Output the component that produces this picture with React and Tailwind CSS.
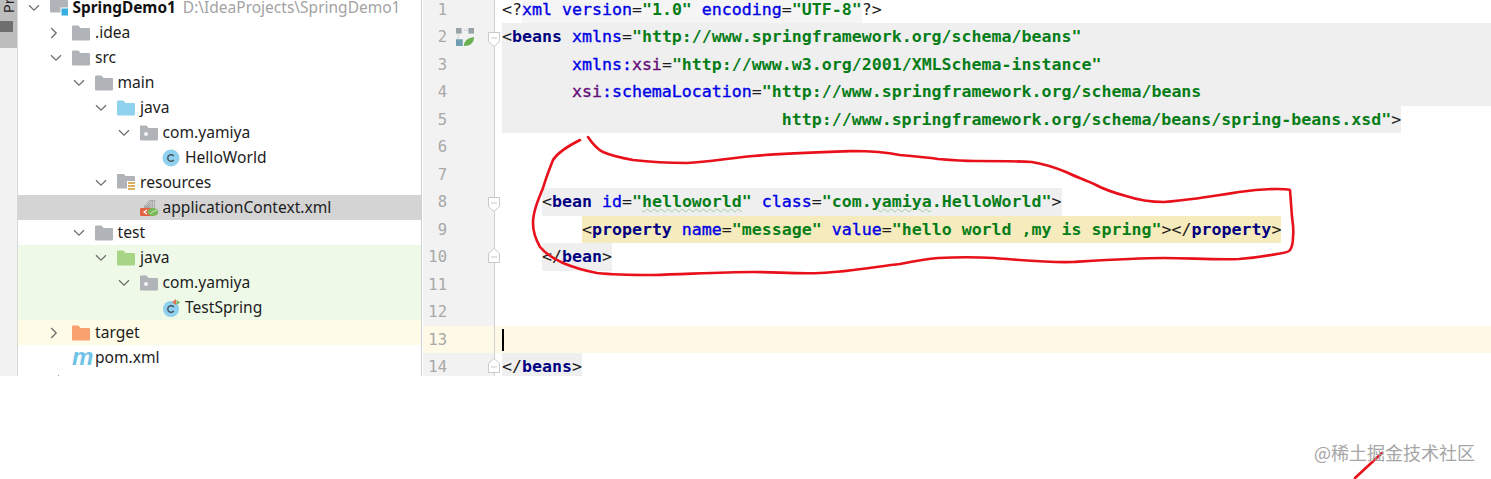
import React from 'react';

const TREE_ROWS = [
  { level: 0, open: true, icon: 'module', label: 'SpringDemo1', bold: true, hint: 'D:\\IdeaProjects\\SpringDemo1' },
  { level: 1, open: false, icon: 'folder', label: '.idea' },
  { level: 1, open: true, icon: 'folder', label: 'src' },
  { level: 2, open: true, icon: 'folder', label: 'main' },
  { level: 3, open: true, icon: 'java', label: 'java' },
  { level: 4, open: true, icon: 'package', label: 'com.yamiya' },
  { level: 5, icon: 'class', label: 'HelloWorld' },
  { level: 3, open: true, icon: 'resources', label: 'resources' },
  { level: 4, icon: 'xml', label: 'applicationContext.xml', rowClass: 'bg-[#d4d4d4]' },
  { level: 2, open: true, icon: 'folder', label: 'test' },
  { level: 3, open: true, icon: 'testJava', label: 'java', rowClass: 'bg-[#eff9e8]' },
  { level: 4, open: true, icon: 'package', label: 'com.yamiya', rowClass: 'bg-[#eff9e8]' },
  { level: 5, icon: 'testClass', label: 'TestSpring', rowClass: 'bg-[#eff9e8]' },
  { level: 1, open: false, icon: 'target', label: 'target', rowClass: 'bg-[#fefbe6]' },
  { level: 1, icon: 'pom', label: 'pom.xml' },
];

const P = 'text-[#1c1c1c]';
const T = 'text-[#000080] font-bold';
const A = 'text-[#0000e6] [-webkit-text-stroke:0.35px_#0000e6]';
const V = 'text-[#067d17] font-bold';
const N = 'text-[#660e7a] [-webkit-text-stroke:0.35px_#660e7a]';
const W = 'text-[#067d17] font-bold underline decoration-wavy decoration-[#9ccf9c] decoration-1';

const CODE_LINES = [
  { spans: [[P, '<?'], [A, 'xml'], [A, ' version'], [P, '='], [V, '"1.0"'], [A, ' encoding'], [P, '='], [V, '"UTF-8"'], [P, '?>']], hl: 'first' },
  { spans: [[P, '<'], [T, 'beans'], [A, ' xmlns'], [P, '='], [V, '"http://www.springframework.org/schema/beans"']], full: true, fold: 'open' },
  { indent: 7, spans: [[A, 'xmlns:'], [N, 'xsi'], [P, '='], [V, '"http://www.w3.org/2001/XMLSchema-instance"']], full: true },
  { indent: 7, spans: [[N, 'xsi'], [A, ':schemaLocation'], [P, '='], [V, '"http://www.springframework.org/schema/beans']], full: true },
  { indent: 28, spans: [[V, 'http://www.springframework.org/schema/beans/spring-beans.xsd"'], [P, '>']], block: true },
  { spans: [] },
  { spans: [] },
  { indent: 4, spans: [[P, '<'], [T, 'bean'], [A, ' id'], [P, '='], [V, '"'], [W, 'helloworld'], [V, '"'], [A, ' class'], [P, '='], [V, '"com.'], [W, 'yamiya'], [V, '.HelloWorld"'], [P, '>']], gray: true, fold: 'open' },
  { indent: 8, spans: [[P, '<'], [T, 'property'], [A, ' name'], [P, '='], [V, '"message"'], [A, ' value'], [P, '='], [V, '"hello world ,my is spring"'], [P, '></'], [T, 'property'], [P, '>']], tan: true },
  { indent: 4, spans: [[P, '</'], [T, 'bean'], [P, '>']], gray: true, fold: 'close' },
  { spans: [] },
  { spans: [] },
  { spans: [], current: true },
  { spans: [[P, '</'], [T, 'beans'], [P, '>']], gray: true, fold: 'close' },
];

const Chevron = ({ open }) =>
  open ? (
    <svg width="12" height="8" viewBox="0 0 12 8" fill="none" stroke="#6e6e6e" strokeWidth="1.3">
      <path d="M1 1.2 6 6.2 11 1.2" />
    </svg>
  ) : (
    <svg width="8" height="12" viewBox="0 0 8 12" fill="none" stroke="#6e6e6e" strokeWidth="1.3">
      <path d="M1.2 1 6.2 6 1.2 11" />
    </svg>
  );

const FOLDER = 'M0 1.5A1 1 0 0 1 1 .5h5.5L8.5 3H17a1 1 0 0 1 1 1v10.5a1 1 0 0 1-1 1H1a1 1 0 0 1-1-1Z';

const TreeIcon = ({ type }) => {
  if (type === 'pom') {
    return <span className="block w-[18px] text-center font-['Liberation_Sans'] text-[24px] leading-[15px] font-bold italic text-[#6fc3e6]">m</span>;
  }
  return (
    <svg width="18" height="18" viewBox="0 0 18 18">
      {type === 'folder' && <path d={FOLDER} fill="#b0b4b8" transform="translate(0 1)" />}
      {type === 'java' && <path d={FOLDER} fill="#8fd2ee" transform="translate(0 1)" />}
      {type === 'testJava' && <path d={FOLDER} fill="#a5d585" transform="translate(0 1)" />}
      {type === 'target' && <path d={FOLDER} fill="#f9a26f" transform="translate(0 1)" />}
      {type === 'package' && (
        <>
          <path d={FOLDER} fill="#b0b4b8" transform="translate(0 1)" />
          <circle cx="6" cy="10" r="2" fill="#f2f2f2" />
        </>
      )}
      {type === 'module' && (
        <>
          <path d={FOLDER} fill="#b0b4b8" transform="translate(0 -2)" />
          <rect x="11" y="9" width="8" height="8" fill="#35ade0" stroke="#fff" strokeWidth="1" />
        </>
      )}
      {type === 'resources' && (
        <>
          <path d={FOLDER} fill="#b0b4b8" transform="translate(0 -1)" />
          <rect x="10" y="7" width="8" height="11" fill="#fff" />
          <path d="M11 9h7M11 12h7M11 15h7" stroke="#dcb05e" strokeWidth="1.8" />
        </>
      )}
      {type === 'class' && (
        <>
          <circle cx="9" cy="9" r="8.5" fill="#8fd0ee" />
          <path d="M11.8 7.2A3.3 3.3 0 1 0 11.8 10.8" fill="none" stroke="#45525c" strokeWidth="1.4" />
        </>
      )}
      {type === 'testClass' && (
        <>
          <circle cx="9" cy="10" r="8" fill="#8fd0ee" />
          <path d="M11.8 8.2A3.3 3.3 0 1 0 11.8 11.8" fill="none" stroke="#45525c" strokeWidth="1.4" />
          <path d="M14 0 10 3.2 14 6Z" fill="#e0724d" />
          <path d="M14.5 1v5L18 3.5Z" fill="#72b556" />
        </>
      )}
      {type === 'xml' && (
        <>
          <path d="M4 7 10 1h5v9H4Z" fill="#a8a8a8" />
          <path d="M6 7 10 3M11 2v7M13.5 2v7" stroke="#d4d4d4" strokeWidth="1" />
          <rect x="0" y="9" width="13" height="8" rx="1" fill="#e0623f" />
          <path d="M7 11 4 13l3 2" fill="none" stroke="#fff" strokeWidth="1.2" />
          <ellipse cx="13" cy="13" rx="5.5" ry="4" fill="#79b957" />
          <path d="M10 15c2-2 4-3 7-4" stroke="#d7eec9" strokeWidth="1" fill="none" />
        </>
      )}
    </svg>
  );
};

const TreeRow = ({ row }) => (
  <div className={`flex h-[25px] items-center whitespace-nowrap ${row.rowClass || ''}`} style={{ paddingLeft: 8.5 + row.level * 22.5 }}>
    <div className="flex w-[23px] flex-none items-center justify-start pl-[1px]">
      {row.open !== undefined && <Chevron open={row.open} />}
    </div>
    <div className="mr-[5px] h-[18px] w-[18px] flex-none">
      <TreeIcon type={row.icon} />
    </div>
    <span className={`${row.bold ? 'text-[15.4px] font-bold text-[#111]' : 'text-[#1c1c1c]'}`}>{row.label}</span>
    {row.hint && <span className="ml-[7px] text-[15.5px] text-[#a3a3a3]">{row.hint}</span>}
  </div>
);

const FoldMark = ({ kind }) =>
  kind === 'open' ? (
    <svg width="12" height="15" viewBox="0 0 12 15" fill="#fff" stroke="#c9c9c9" className="absolute right-[-6px] top-[9px]">
      <path d="M.5.5h11v9l-5.500 5-5.500-5Z" />
      <path d="M3 6h6" />
    </svg>
  ) : (
    <svg width="12" height="15" viewBox="0 0 12 15" fill="#fff" stroke="#c9c9c9" className="absolute right-[-6px] top-[5px]">
      <path d="M.5 14.500h11v-9l-5.500-5-5.500 5Z" />
      <path d="M3 9h6" />
    </svg>
  );

const SpringMark = () => (
  <svg width="18" height="18" viewBox="0 0 16 16" className="absolute left-[33px] top-[5px]">
    <rect x="0" y="0" width="5" height="5" fill="#9aa3a8" />
    <rect x="11" y="0" width="5" height="5" fill="#9aa3a8" />
    <rect x="0" y="10" width="6" height="6" fill="#6f9fb0" />
    <path d="M2 6v3M7 2h3" stroke="#b5b5b5" strokeDasharray="1 1" />
    <path d="M7 16c0-5 4-7 9-8 0 5-3 8-9 8Z" fill="#69b04e" />
  </svg>
);

const CodeLine = ({ line, number }) => {
  const text = line.spans.map(([cls, str], i) => (
    <span key={i} className={cls}>{str}</span>
  ));
  const pad = ' '.repeat(line.indent || 0);
  let body = (
    <>
      {pad}
      {text}
    </>
  );
  if (line.hl === 'first') {
    const [open, ...rest] = text;
    const close = rest.pop();
    body = (
      <>
        {open}
        <span className="inline-block h-[27.5px] bg-[#f5f5f5]">{rest}</span>
        {close}
      </>
    );
  } else if (line.block) {
    body = <span className="inline-block h-[27.5px] bg-[#efefef]">{pad}{text}</span>;
  } else if (line.gray) {
    body = <>{pad}<span className="inline-block h-[27.5px] bg-[#efefef]">{text}</span></>;
  } else if (line.tan) {
    body = <>{pad}<span className="inline-block h-[27.5px] rounded-[1px] bg-[#f6ebbc]">{text}</span></>;
  }

  return (
    <div className={`flex h-[27.5px] ${line.current ? 'bg-[#fef9e6]' : ''}`}>
      <div className={`relative w-[72px] flex-none border-r border-[#d0d0d0] pr-[47px] text-right font-['DejaVu_Sans_Mono'] text-[15.5px] leading-[29px] text-[#a8a8a8] ${line.current ? 'bg-[#fefae7]' : 'bg-[#f2f2f2]'}`}>
        {number}
        {number === 2 && <SpringMark />}
        {line.fold && <FoldMark kind={line.fold} />}
      </div>
      <div className={`relative ml-[7px] min-w-0 flex-1 whitespace-pre font-['DejaVu_Sans_Mono'] text-[16.6px] leading-[28.5px] ${line.full ? 'bg-[#efefef]' : ''}`}>
        {body}
        {line.current && <span className="absolute left-0 top-[3px] h-[22px] w-[2px] bg-black" />}
      </div>
    </div>
  );
};

const App = () => {
  return (
    <div className="relative h-[479px] w-[1491px] overflow-hidden bg-white font-['Noto_Sans',sans-serif]">
      <div className="flex h-[376px] overflow-hidden">
        <div className="w-[18px] flex-none border-r border-[#d8d8d8] bg-[#f2f2f2]">
          <div className="h-[48px] bg-[#bdbdbd]">
            <div className="flex h-[13px] items-end justify-center overflow-hidden">
              <span className="rotate-180 text-[15px] leading-[15px] text-[#222] [writing-mode:vertical-rl]">Pr</span>
            </div>
            <div className="mt-[8px] h-[11px] w-[13px] rounded-r-[1px] bg-[#6e6e6e]" />
          </div>
        </div>

        <div className="-mt-[5px] w-[403px] flex-none text-[15.6px] leading-[25px]">
          {TREE_ROWS.map((row, i) => (
            <TreeRow key={i} row={row} />
          ))}
          <div className="ml-[40px] mt-[5px] h-px w-px bg-[#9a9a9a]" />
        </div>

        <div className="min-w-0 flex-1 -mt-[4.500px] border-l border-[#d0d0d0] pl-px">
          {CODE_LINES.map((line, i) => (
            <CodeLine key={i} line={line} number={i + 1} />
          ))}
        </div>
      </div>

      {/* hand drawn annotation on top of the screenshot */}
      <svg width="1491" height="479" viewBox="0 0 1491 479" fill="none" stroke="#e8101a" strokeWidth="2.6" strokeLinejoin="round" strokeLinecap="round" className="pointer-events-none absolute inset-0">
        <path d="M580 140C568 146 558 152 553 160C549 170 546 178 543 188C538 200 533 212 533 223C533 233 536 240 540 247C546 254 554 259 563 263C575 268 586 271 597 273C615 275 635 275 653 275C690 274 720 272 753 272C775 272 798 274 820 273C850 272 880 266 900 264C915 261 925 259 938 258C958 257 975 257 994 258C1020 260 1050 263 1073 262C1105 260 1135 258 1164 258C1190 258 1215 260 1239 259C1252 258 1266 256 1277 254C1285 253 1289 252 1290 250C1293 246 1293 242 1293 237C1294 230 1293 224 1292 217L1290 190C1286 189 1282 189 1277 189C1264 189 1252 190 1239 192C1215 196 1190 200 1164 202C1150 202 1138 200 1126 196C1115 193 1105 190 1096 185C1086 180 1076 177 1066 172C1054 167 1044 164 1032 162C1012 161 995 161 975 161C962 161 950 160 938 159C925 157 912 156 900 155C885 152 870 151 853 151C820 152 785 153 753 156C730 158 708 162 687 163C668 163 650 162 633 160C622 158 612 156 603 152C597 149 592 143 588 137" />
        <path d="M1355 478 1382 453" />
      </svg>
      <span className="absolute right-[16px] top-[440px] font-['Noto_Sans_CJK_SC',sans-serif] text-[18px] leading-[24px] text-[#a6a6a6]">@稀土掘金技术社区</span>
    </div>
  );
};

export default App;
